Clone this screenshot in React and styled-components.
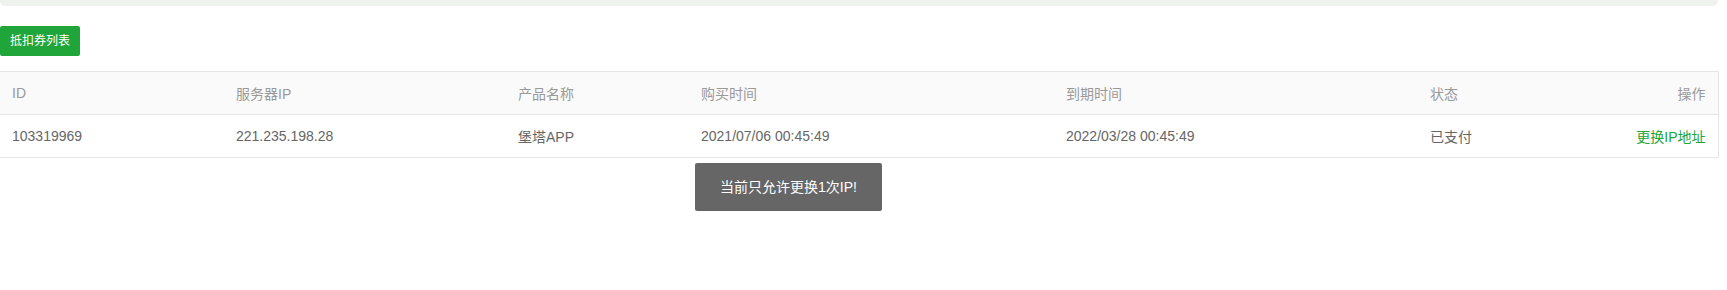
import React from "react";
import styled, { createGlobalStyle } from "styled-components";

const Global = createGlobalStyle`
  html, body { margin: 0; padding: 0; background: #fff; }
  body {
    font-family: "Liberation Sans", Arial, "Noto Sans CJK SC", sans-serif;
    font-size: 14px;
    color: #666;
  }
`;

const Page = styled.div`
  position: relative;
  width: 1727px;
  height: 290px;
  overflow: hidden;
`;

const TopBar = styled.div`
  height: 6px;
  margin-right: 9px;
  background: #eef3ee;
  border-radius: 0 0 5px 5px;
`;

const Main = styled.div`
  padding: 20px 9px 0 0;
`;

const Button = styled.button`
  display: inline-flex;
  align-items: center;
  height: 30px;
  padding: 0 10px;
  border: none;
  border-radius: 2px;
  background: #20a53a;
  color: #fff;
  font-family: inherit;
  font-size: 12px;
  line-height: 30px;
  cursor: pointer;
`;

const Table = styled.table`
  margin-top: 15px;
  width: 1718px;
  border-collapse: collapse;
  table-layout: fixed;
  border-top: 1px solid #e6e6e6;
  border-right: 1px solid #e6e6e6;
`;

const Th = styled.th`
  height: 42px;
  padding: 0 12px;
  background: #fafafa;
  color: #999;
  font-weight: normal;
  font-size: 14px;
  white-space: nowrap;
  text-align: ${(p) => (p.$right ? "right" : "left")};
  border-bottom: 1px solid #e3e6ea;
`;

const Td = styled.td`
  height: 42px;
  padding: 0 12px;
  color: #666;
  font-size: 14px;
  white-space: nowrap;
  text-align: ${(p) => (p.$right ? "right" : "left")};
  border-bottom: 1px solid #e6e6e6;
`;

const Link = styled.a`
  color: #20a53a;
  text-decoration: none;
  cursor: pointer;
`;

const Toast = styled.div`
  position: absolute;
  left: 695px;
  top: 163px;
  padding: 12px 25px;
  line-height: 24px;
  font-size: 14px;
  color: #fff;
  background: #666;
  border-radius: 2px;
  white-space: nowrap;
`;

const cols = [224, 282, 183, 365, 364, 150, 150];

export default function App() {
  return (
    <Page>
      <Global />
      <TopBar />
      <Main>
        <Button>抵扣券列表</Button>
        <Table>
          <colgroup>
            {cols.map((w, i) => (
              <col key={i} style={{ width: w }} />
            ))}
          </colgroup>
          <thead>
            <tr>
              <Th>ID</Th>
              <Th>服务器IP</Th>
              <Th>产品名称</Th>
              <Th>购买时间</Th>
              <Th>到期时间</Th>
              <Th>状态</Th>
              <Th $right>操作</Th>
            </tr>
          </thead>
          <tbody>
            <tr>
              <Td>103319969</Td>
              <Td>221.235.198.28</Td>
              <Td>堡塔APP</Td>
              <Td>2021/07/06 00:45:49</Td>
              <Td>2022/03/28 00:45:49</Td>
              <Td>已支付</Td>
              <Td $right>
                <Link>更换IP地址</Link>
              </Td>
            </tr>
          </tbody>
        </Table>
      </Main>
      <Toast>当前只允许更换1次IP!</Toast>
    </Page>
  );
}
